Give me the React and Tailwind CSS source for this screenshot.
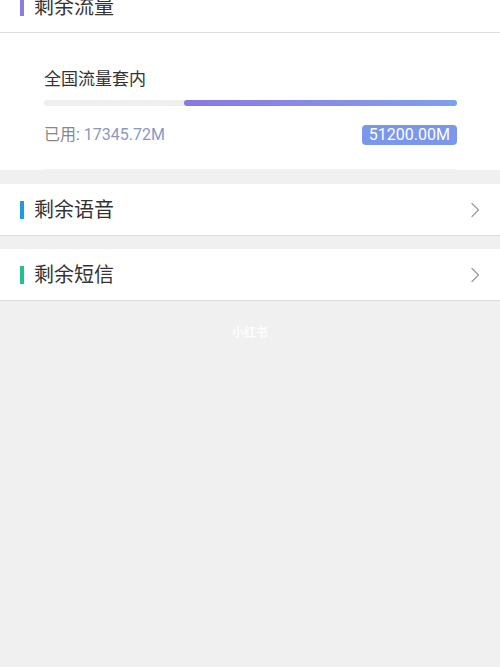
function Chevron() {
  return (
    <svg width="10" height="16" viewBox="0 0 10 16" fill="none">
      <polyline points="2,1.5 8.5,8 2,14.5" stroke="#9e9e9e" strokeWidth="1.4" strokeLinecap="round" strokeLinejoin="round" />
    </svg>
  );
}

function Row({ title, bar, arrow = true, className = '' }) {
  return (
    <div className={`h-[52px] bg-white border-b border-[#dcdcdc] flex items-center pl-[20px] pr-[20px] ${className}`}>
      <span className={`w-[4px] h-[18px] ${bar}`} />
      <span className="ml-[10px] text-[20px] text-[#333] leading-none">{title}</span>
      <div className="flex-1" />
      {arrow && <Chevron />}
    </div>
  );
}

export default function App() {
  const used = 17345.72;
  const total = 51200;
  const pct = (used / total) * 100;

  return (
    <div
      className="min-h-[667px] bg-[#f0f0f0] overflow-hidden"
      style={{ fontFamily: 'Roboto, "Noto Sans CJK SC", "Noto Sans", sans-serif' }}
    >
      {/* 剩余流量 */}
      <Row title="剩余流量" bar="bg-[#8b7ee2]" arrow={false} className="-mt-[19px]" />
      <div className="bg-white pl-[44px] pr-[43px] pt-[34px]">
        <div className="text-[17px] leading-[24px] text-[#333]">全国流量套内</div>
        <div className="mt-[9px] h-[6px] rounded-full bg-[#eeeeee] flex">
          <div style={{ width: `${pct}%` }} />
          <div className="flex-1 rounded-full bg-gradient-to-r from-[#8a78e4] to-[#7ea0ec]" />
        </div>
        <div className="mt-[19px] flex items-center justify-between">
          <div className="text-[16px] leading-[20px]">
            <span className="text-[#888]">已用: </span>
            <span className="text-[#8a97c4]">{used.toFixed(2)}M</span>
          </div>
          <span className="h-[20px] px-[7px] rounded-[4px] bg-[#7b97ec] text-white text-[16px] leading-[20px]">
            {total.toFixed(2)}M
          </span>
        </div>
        <div className="mt-[24px] h-[1px] bg-[#f3f3f3]" />
      </div>

      <Row title="剩余语音" bar="bg-[#1d9ae0]" className="mt-[14px]" />
      <Row title="剩余短信" bar="bg-[#22c08a]" className="mt-[13px]" />

      <div className="mt-[24px] text-center text-white font-bold text-[12px] leading-[16px] opacity-90">小红书</div>
    </div>
  );
}
